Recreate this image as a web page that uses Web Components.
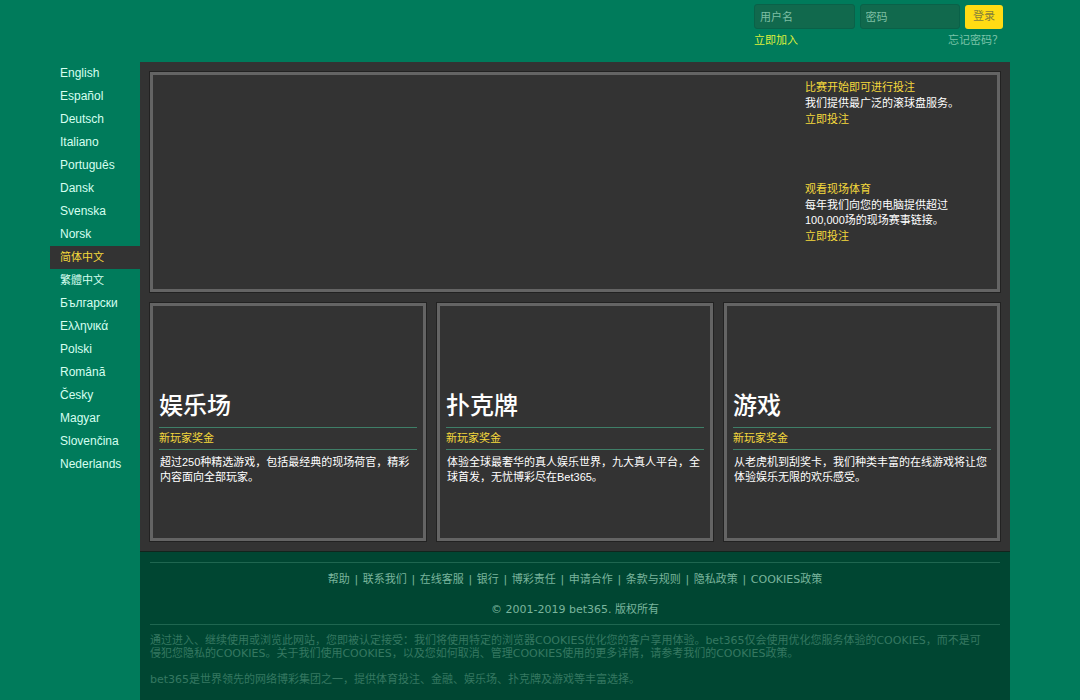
<!DOCTYPE html>
<html lang="zh-CN">
<head>
<meta charset="utf-8">
<title>bet365</title>

<style>
:root {
	--page		:#007b5b;
	--panel		:#333333;
	--frame		:#646464;
	--yellow	:#f5d93c;
	--rule		:#3f7f68;
	--footer	:#004632;
}
body {
	margin		:0;
	background	:var(--page);
	color		:#ffffff;
	font		:11px/15px "Liberation Sans", "Noto Sans CJK SC", sans-serif;
}
</style>

<template id="page-tmpl">
	<style>
	:host {
		display		:block;
		padding		:0 70px 0 50px;
	}
	.columns {
		display		:grid;
		grid-template-columns:90px 1fr;
	}
	</style>
	<slot name="header"></slot>
	<div class="columns">
		<slot name="side"></slot>
		<div><slot></slot></div>
	</div>
</template>

<template id="login-tmpl">
	<style>
	:host {
		display		:flex;
		justify-content	:flex-end;
		box-sizing	:border-box;
		height		:62px;
		padding		:4px 7px 0 0;
	}
	form {
		width		:249px;
	}
	.fields, .links {
		display		:flex;
		justify-content	:space-between;
		align-items	:center;
	}
	.fields {
		gap		:5px;
	}
	.links {
		padding-top	:3px;
		line-height	:16px;
	}
	input {
		flex		:1;
		min-width	:0;
		height		:25px;
		box-sizing	:border-box;
		margin		:0;
		padding		:0 5px;
		border		:1px solid #0a6148;
		border-radius	:3px;
		background	:#11694d;
		color		:#ffffff;
		font		:inherit;
	}
	input::placeholder {
		color		:#7fbfa4;
		opacity		:1;
	}
	button {
		width		:38px;
		height		:24px;
		padding		:0;
		border		:0;
		border-radius	:3px;
		background	:#ffdc14;
		color		:#85803a;
		font		:inherit;
	}
	a {
		color		:#7cc4a9;
		text-decoration	:none;
	}
	a.join {
		color		:#dff03c;
	}
	</style>
	<form>
		<div class="fields">
			<input type="text" placeholder="用户名" aria-label="用户名">
			<input type="password" placeholder="密码" aria-label="密码">
			<button type="button">登录</button>
		</div>
		<div class="links">
			<a class="join" href="#join">立即加入</a>
			<a href="#lost">忘记密码？</a>
		</div>
	</form>
</template>

<template id="language-tmpl">
	<style>
	nav {
		display		:flex;
		flex-direction	:column;
	}
	a {
		padding-left	:10px;
		color		:#d6fff0;
		font-size	:12px;
		line-height	:23px;
		height		:23px;
		text-decoration	:none;
	}
	a:lang(zh) {
		font-size	:11px;
	}
	a[aria-current] {
		background	:var(--panel);
		color		:var(--yellow);
	}
	</style>
	<nav></nav>
</template>

<template id="feature-tmpl">
	<style>
	:host {
		display		:flex;
		flex-direction	:column;
		align-items	:flex-end;
		box-sizing	:border-box;
		min-height	:220px;
		padding		:4px 22px 0 0;
		border		:3px solid var(--frame);
		box-shadow	:0 0 0 1px #222222;
	}
	</style>
	<slot></slot>
</template>

<template id="teaser-tmpl">
	<style>
	:host {
		display		:block;
		width		:170px;
		min-height	:102px;
	}
	h3, a {
		display		:block;
		margin		:0;
		color		:var(--yellow);
		font-size	:11px;
		font-weight	:normal;
		line-height	:16px;
		text-decoration	:none;
	}
	p {
		margin		:0;
		padding-top	:1px;
	}
	</style>
	<h3></h3>
	<p><slot></slot></p>
	<a href="#bet">立即投注</a>
</template>

<template id="card-tmpl">
	<style>
	:host {
		display		:block;
		box-sizing	:border-box;
		min-height	:238px;
		padding		:79px 6px 0;
		border		:3px solid var(--frame);
		box-shadow	:0 0 0 1px #222222;
	}
	h2 {
		margin		:0;
		font-size	:24px;
		font-weight	:500;
		line-height	:42px;
	}
	h3 {
		margin		:0;
		border		:solid var(--rule);
		border-width	:1px 0;
		color		:var(--yellow);
		font-size	:11px;
		font-weight	:normal;
		line-height	:21px;
	}
	p {
		margin		:0;
		padding		:5px 1px 0;
	}
	</style>
	<h2></h2>
	<h3>新玩家奖金</h3>
	<p><slot></slot></p>
</template>

<template id="main-tmpl">
	<style>
	:host {
		display		:grid;
		grid-template-columns:repeat(3, 1fr);
		gap		:11px;
		padding		:10px;
		background	:var(--panel);
	}
	::slotted(promo-feature) {
		grid-column	:1 / -1;
	}
	</style>
	<slot></slot>
</template>

<template id="footer-tmpl">
	<style>
	:host {
		display		:block;
		min-height	:149px;
		box-sizing	:border-box;
		padding		:10px 10px 0;
		border-top	:1px solid #12241c;
		background	:var(--footer);
		color		:#7ab59d;
		font-family	:"DejaVu Sans", "Noto Sans CJK SC", sans-serif;
	}
	.top {
		padding		:9px 0 6px;
		border		:solid #1f6650;
		border-width	:1px 0;
		text-align	:center;
	}
	nav {
		display		:flex;
		justify-content	:center;
		line-height	:16px;
	}
	nav span {
		flex		:0 0 13px;
	}
	a {
		color		:inherit;
		text-decoration	:none;
	}
	.copy {
		padding-top	:14px;
		line-height	:16px;
	}
	.legal {
		padding		:9px 10px 0 0;
		color		:#357861;
		line-height	:13px;
	}
	</style>
	<div class="top">
		<nav></nav>
		<div class="copy">© 2001-2019 bet365. 版权所有</div>
	</div>
	<div class="legal"><slot></slot></div>
</template>

<script>
// Общая основа: клонирует шаблон в открытый shadow root
class Templated extends HTMLElement {
	constructor(id) {
		super();
		this.root = this.attachShadow({mode: "open"});
		this.root.append(document.getElementById(id).content.cloneNode(true));
	}
	find(selector) {
		return this.root.querySelector(selector);
	}
}

class SitePage extends Templated {
	constructor() { super("page-tmpl"); }
}

class LoginBar extends Templated {
	constructor() { super("login-tmpl"); }
}

const	languages = [
	["en", "English"], ["es", "Español"], ["de", "Deutsch"],
	["it", "Italiano"], ["pt", "Português"], ["da", "Dansk"],
	["sv", "Svenska"], ["no", "Norsk"], ["zh-CN", "简体中文"],
	["zh-TW", "繁體中文"], ["bg", "Български"], ["el", "Ελληνικά"],
	["pl", "Polski"], ["ro", "Română"], ["cs", "Česky"],
	["hu", "Magyar"], ["sk", "Slovenčina"], ["nl", "Nederlands"]
];

class LanguageMenu extends Templated {
	constructor() { super("language-tmpl"); }
	connectedCallback() {
		const	hNav = this.find("nav");
		hNav.replaceChildren();
		for(const [code, name] of languages) {
			const	hLink = document.createElement("a");
			hLink.href = `#${code}`;
			hLink.lang = code;
			hLink.textContent = name;
			if(code == this.getAttribute("current"))
				hLink.setAttribute("aria-current", "true");
			hNav.appendChild(hLink);
		}
	}
}

class MainPanel extends Templated {
	constructor() { super("main-tmpl"); }
}

class PromoFeature extends Templated {
	constructor() { super("feature-tmpl"); }
}

class PromoTeaser extends Templated {
	constructor() { super("teaser-tmpl"); }
	connectedCallback() {
		this.find("h3").textContent = this.getAttribute("heading");
	}
}

class PromoCard extends Templated {
	constructor() { super("card-tmpl"); }
	connectedCallback() {
		this.find("h2").textContent = this.getAttribute("heading");
	}
}

const	footer_links = [
	"帮助", "联系我们", "在线客服", "银行", "博彩责任", "申请合作",
	"条款与规则", "隐私政策", "COOKIES政策"
];

class SiteFooter extends Templated {
	constructor() { super("footer-tmpl"); }
	connectedCallback() {
		this.find("nav").innerHTML = footer_links
			.map(text => `<a href="#info">${text}</a>`)
			.join("<span>|</span>");
	}
}

addEventListener("DOMContentLoaded", function() {
	customElements.define("site-page", SitePage);
	customElements.define("login-bar", LoginBar);
	customElements.define("language-menu", LanguageMenu);
	customElements.define("main-panel", MainPanel);
	customElements.define("promo-feature", PromoFeature);
	customElements.define("promo-teaser", PromoTeaser);
	customElements.define("promo-card", PromoCard);
	customElements.define("site-footer", SiteFooter);
});
</script>
</head>

<body>
<site-page>
	<login-bar slot="header"></login-bar>
	<language-menu slot="side" current="zh-CN"></language-menu>
	<main-panel>
		<promo-feature>
			<promo-teaser heading="比赛开始即可进行投注">我们提供最广泛的滚球盘服务。</promo-teaser>
			<promo-teaser heading="观看现场体育">每年我们向您的电脑提供超过100,000场的现场赛事链接。</promo-teaser>
		</promo-feature>
		<promo-card heading="娱乐场">超过250种精选游戏，包括最经典的现场荷官，精彩内容面向全部玩家。</promo-card>
		<promo-card heading="扑克牌">体验全球最奢华的真人娱乐世界，九大真人平台，全球首发，无忧博彩尽在Bet365。</promo-card>
		<promo-card heading="游戏">从老虎机到刮奖卡，我们种类丰富的在线游戏将让您体验娱乐无限的欢乐感受。</promo-card>
	</main-panel>
	<site-footer>
		通过进入、继续使用或浏览此网站，您即被认定接受：我们将使用特定的浏览器COOKIES优化您的客户享用体验。bet365仅会使用优化您服务体验的COOKIES，而不是可侵犯您隐私的COOKIES。关于我们使用COOKIES，以及您如何取消、管理COOKIES使用的更多详情，请参考我们的COOKIES政策。<br><br>
		bet365是世界领先的网络博彩集团之一，提供体育投注、金融、娱乐场、扑克牌及游戏等丰富选择。
	</site-footer>
</site-page>
</body>
</html>
